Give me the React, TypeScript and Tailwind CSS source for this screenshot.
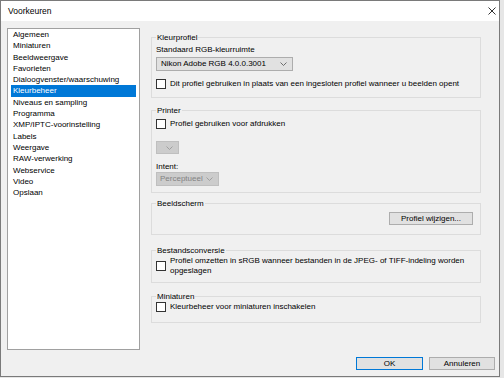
import React from "react";

const items = [
  "Algemeen",
  "Miniaturen",
  "Beeldweergave",
  "Favorieten",
  "Dialoogvenster/waarschuwing",
  "Kleurbeheer",
  "Niveaus en sampling",
  "Programma",
  "XMP/IPTC-voorinstelling",
  "Labels",
  "Weergave",
  "RAW-verwerking",
  "Webservice",
  "Video",
  "Opslaan",
];

function Chevron({ color = "#606060" }: { color?: string }) {
  return (
    <svg width="7" height="4" viewBox="0 0 7 4" className="shrink-0">
      <path d="M0.5 0.5 L3.5 3.5 L6.5 0.5" fill="none" stroke={color} strokeWidth="0.9" />
    </svg>
  );
}

function Box() {
  return <span className="w-[10px] h-[10px] border border-[#333333] bg-white shrink-0" />;
}

function Check({ label }: { label: string }) {
  return (
    <div className="flex items-center gap-[4px] h-[12px] whitespace-nowrap">
      <Box />
      <span>{label}</span>
    </div>
  );
}

function Group({ title, children, className = "" }: { title: string; children: React.ReactNode; className?: string }) {
  return (
    <fieldset className={`border border-[#dcdcdc] px-[4px] m-0 min-w-0 ${className}`}>
      <legend className="px-[1px] leading-[11px]">{title}</legend>
      {children}
    </fieldset>
  );
}

export default function App() {
  return (
    <div
      className="w-[504px] h-[378px] bg-[#e6e6e6] text-[8px] text-black overflow-hidden"
      style={{ fontFamily: '"Liberation Sans", Arial, sans-serif' }}
    >
      <div className="w-[500px] h-[377px] border border-[#7a7a7a] flex flex-col bg-[#f0f0f0]">
        <div className="h-[20px] bg-white flex items-center justify-between pl-[7px] pr-[3px]">
          <span className="text-[8.5px]">Voorkeuren</span>
          <svg width="8" height="8" viewBox="0 0 8 8">
            <path d="M0.5 0.5 L7.5 7.5 M7.5 0.5 L0.5 7.5" stroke="#1a1a1a" strokeWidth="0.9" />
          </svg>
        </div>

        <div className="flex flex-1 pt-[7px] pl-[6px]">
          <div className="w-[133px] h-[322px] bg-white border border-[#a0a0a0] px-[3px] shrink-0">
            <ul className="leading-[11.3px]">
              {items.map((it) => (
                <li
                  key={it}
                  className={it === "Kleurbeheer" ? "bg-[#0078d7] text-white pl-[2px]" : "pl-[2px]"}
                >
                  {it}
                </li>
              ))}
            </ul>
          </div>

          <div className="ml-[11px] mt-[4px] w-[330px] flex flex-col">
            <Group title="Kleurprofiel" className="pb-[7px]">
              <div className="leading-[11px] mt-[1px]">Standaard RGB-kleurruimte</div>
              <div className="mt-[2px] w-[137px] h-[14px] bg-[#e1e1e1] border border-[#adadad] flex items-center justify-between pl-[4px] pr-[5px]">
                <span>Nikon Adobe RGB 4.0.0.3001</span>
                <Chevron />
              </div>
              <div className="mt-[7px]">
                <Check label="Dit profiel gebruiken in plaats van een ingesloten profiel wanneer u beelden opent" />
              </div>
            </Group>

            <Group title="Printer" className="mt-[7px] pb-[6px]">
              <div className="mt-[2px]">
                <Check label="Profiel gebruiken voor afdrukken" />
              </div>
              <div className="mt-[11px] w-[23px] h-[13px] bg-[#cccccc] border border-[#bfbfbf] flex items-center justify-end pr-[5px]">
                <Chevron color="#9a9a9a" />
              </div>
              <div className="leading-[11px] mt-[7px]">Intent:</div>
              <div className="w-[63px] h-[14px] bg-[#cccccc] border border-[#bfbfbf] flex items-center justify-between pl-[3px] pr-[5px] text-[#838383]">
                <span>Perceptueel</span>
                <Chevron color="#9a9a9a" />
              </div>
            </Group>

            <Group title="Beeldscherm" className="mt-[5px] pb-[9px]">
              <div className="flex justify-end pr-[3px] mt-[3px]">
                <button className="w-[84px] h-[13px] bg-[#e1e1e1] border border-[#adadad] leading-none">
                  Profiel wijzigen...
                </button>
              </div>
            </Group>

            <Group title="Bestandsconversie" className="mt-[10px] pb-[6px]">
              <div className="flex items-center gap-[4px]">
                <Box />
                <span className="leading-[10px]">
                  Profiel omzetten in sRGB wanneer bestanden in de JPEG- of TIFF-indeling worden
                  <br />
                  opgeslagen
                </span>
              </div>
            </Group>

            <Group title="Miniaturen" className="mt-[8px] pb-[9px]">
              <div className="-mt-[1px]">
                <Check label="Kleurbeheer voor miniaturen inschakelen" />
              </div>
            </Group>
          </div>
        </div>

        <div className="flex justify-end gap-[6px] pr-[4px] pb-[6px]">
          <button className="w-[67px] h-[13px] bg-[#e1e1e1] border border-[#0078d7] leading-none">OK</button>
          <button className="w-[66px] h-[13px] bg-[#e1e1e1] border border-[#adadad] leading-none">Annuleren</button>
        </div>
      </div>
    </div>
  );
}
